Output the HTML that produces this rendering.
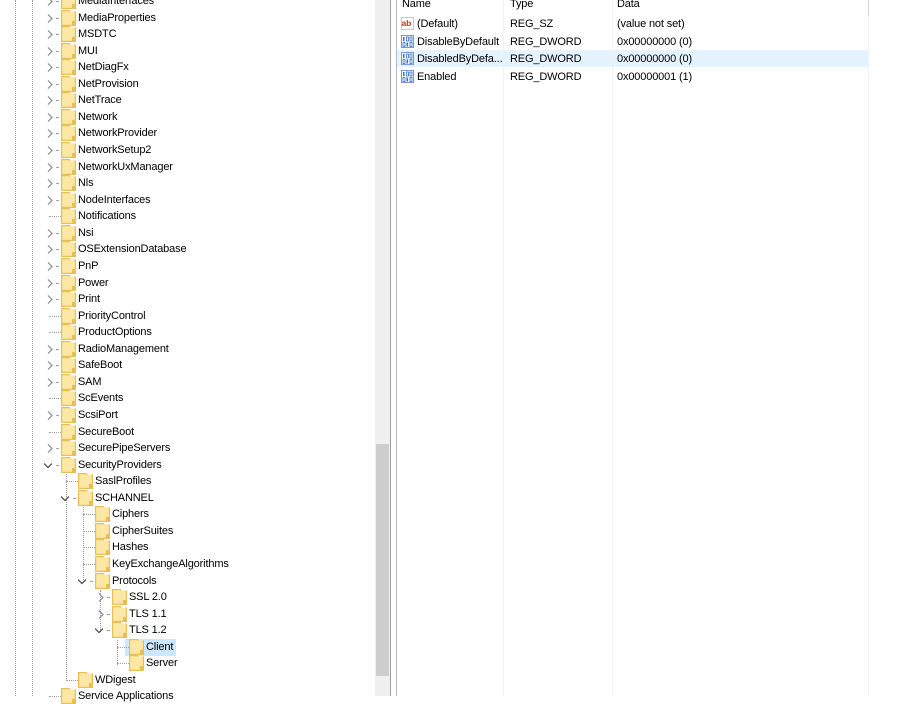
<!DOCTYPE html>
<html><head><meta charset="utf-8"><style>
*{margin:0;padding:0;box-sizing:border-box}
body{width:899px;height:696px;overflow:hidden;background:#fff;font-family:"Liberation Sans",sans-serif;font-size:11px;letter-spacing:-0.15px;color:#000;position:relative}
.r{position:absolute;left:0;width:374px;height:17px}
.t{position:absolute;top:2px;line-height:15px;white-space:nowrap;padding:0 2px;margin-left:-2px}
.f{position:absolute;top:1px;width:15px;height:16px}
.e{position:absolute;top:5px;width:8px;height:9px}
.dh{position:absolute;top:9px;height:0;border-top:1px dotted #a0a0a0}
.dash{position:absolute;top:9px;width:3px;height:1px;background:#a0a0a0}
.dv{position:absolute;width:0;border-left:1px dotted #a0a0a0}
.h{position:absolute;top:-2px;color:#000}
.rr{position:absolute;left:397px;width:471px;height:17px}
.rr span{position:absolute;top:3px;white-space:nowrap}
.ic{position:absolute;left:4px;top:2px;width:13px;height:13px}
</style></head><body>
<svg width="0" height="0" style="position:absolute"><defs>
<symbol id="fd" viewBox="0 0 15 16"><path d="M0.5 0.5h8l1 1.5h5v13.5h-14z" fill="#f8d775" stroke="#e6be5a"/><rect x="1.5" y="1.5" width="12" height="13" fill="#fde7a4"/><rect x="11" y="11" width="3" height="4" fill="#e8bd55"/></symbol>
<symbol id="cr" viewBox="0 0 8 9"><path d="M2 0.5l4 4-4 4" fill="none" stroke="#8a8a8a" stroke-width="1.2"/></symbol>
<symbol id="cd" viewBox="0 0 8 9"><path d="M0 2.5l4 4 4-4" fill="none" stroke="#444" stroke-width="1.2"/></symbol>
<symbol id="bin" viewBox="0 0 13 13"><rect x="0.5" y="0.5" width="12" height="12" fill="#fff" stroke="#7f96d0"/><rect x="2" y="2" width="1.5" height="4" fill="#3a6cc8"/><rect x="5.5" y="2" width="2" height="4" fill="none" stroke="#3a6cc8" stroke-width="0.8"/><rect x="9" y="2" width="2" height="4" fill="none" stroke="#3a6cc8" stroke-width="0.8"/><rect x="2" y="7.5" width="2" height="4" fill="none" stroke="#3a6cc8" stroke-width="0.8"/><rect x="5.5" y="7.5" width="1.5" height="4" fill="#3a6cc8"/><rect x="9" y="7.5" width="2" height="4" fill="none" stroke="#3a6cc8" stroke-width="0.8"/></symbol>
</defs></svg>

<div class="dv" style="left:15px;top:0;height:696px"></div>
<div class="dv" style="left:32px;top:0;height:696px"></div>
<div class="dv" style="left:66px;top:474px;height:207px"></div>
<div class="dv" style="left:83px;top:507px;height:75px"></div>
<div class="dv" style="left:100px;top:590px;height:42px"></div>
<div class="dv" style="left:117px;top:640px;height:25px"></div>

<div class="r" style="top:-8px"><svg class="e" style="left:46px"><use href="#cr"/></svg><div class="dash" style="left:56px"></div><svg class="f" style="left:61px"><use href="#fd"/></svg><span class="t" style="left:78px">MediaInterfaces</span></div>
<div class="r" style="top:9px"><svg class="e" style="left:46px"><use href="#cr"/></svg><div class="dash" style="left:56px"></div><svg class="f" style="left:61px"><use href="#fd"/></svg><span class="t" style="left:78px">MediaProperties</span></div>
<div class="r" style="top:25px"><svg class="e" style="left:46px"><use href="#cr"/></svg><div class="dash" style="left:56px"></div><svg class="f" style="left:61px"><use href="#fd"/></svg><span class="t" style="left:78px">MSDTC</span></div>
<div class="r" style="top:42px"><svg class="e" style="left:46px"><use href="#cr"/></svg><div class="dash" style="left:56px"></div><svg class="f" style="left:61px"><use href="#fd"/></svg><span class="t" style="left:78px">MUI</span></div>
<div class="r" style="top:58px"><svg class="e" style="left:46px"><use href="#cr"/></svg><div class="dash" style="left:56px"></div><svg class="f" style="left:61px"><use href="#fd"/></svg><span class="t" style="left:78px">NetDiagFx</span></div>
<div class="r" style="top:75px"><svg class="e" style="left:46px"><use href="#cr"/></svg><div class="dash" style="left:56px"></div><svg class="f" style="left:61px"><use href="#fd"/></svg><span class="t" style="left:78px">NetProvision</span></div>
<div class="r" style="top:91px"><svg class="e" style="left:46px"><use href="#cr"/></svg><div class="dash" style="left:56px"></div><svg class="f" style="left:61px"><use href="#fd"/></svg><span class="t" style="left:78px">NetTrace</span></div>
<div class="r" style="top:108px"><svg class="e" style="left:46px"><use href="#cr"/></svg><div class="dash" style="left:56px"></div><svg class="f" style="left:61px"><use href="#fd"/></svg><span class="t" style="left:78px">Network</span></div>
<div class="r" style="top:124px"><svg class="e" style="left:46px"><use href="#cr"/></svg><div class="dash" style="left:56px"></div><svg class="f" style="left:61px"><use href="#fd"/></svg><span class="t" style="left:78px">NetworkProvider</span></div>
<div class="r" style="top:141px"><svg class="e" style="left:46px"><use href="#cr"/></svg><div class="dash" style="left:56px"></div><svg class="f" style="left:61px"><use href="#fd"/></svg><span class="t" style="left:78px">NetworkSetup2</span></div>
<div class="r" style="top:158px"><svg class="e" style="left:46px"><use href="#cr"/></svg><div class="dash" style="left:56px"></div><svg class="f" style="left:61px"><use href="#fd"/></svg><span class="t" style="left:78px">NetworkUxManager</span></div>
<div class="r" style="top:174px"><svg class="e" style="left:46px"><use href="#cr"/></svg><div class="dash" style="left:56px"></div><svg class="f" style="left:61px"><use href="#fd"/></svg><span class="t" style="left:78px">Nls</span></div>
<div class="r" style="top:191px"><svg class="e" style="left:46px"><use href="#cr"/></svg><div class="dash" style="left:56px"></div><svg class="f" style="left:61px"><use href="#fd"/></svg><span class="t" style="left:78px">NodeInterfaces</span></div>
<div class="r" style="top:207px"><div class="dh" style="left:49px;width:12px"></div><svg class="f" style="left:61px"><use href="#fd"/></svg><span class="t" style="left:78px">Notifications</span></div>
<div class="r" style="top:224px"><svg class="e" style="left:46px"><use href="#cr"/></svg><div class="dash" style="left:56px"></div><svg class="f" style="left:61px"><use href="#fd"/></svg><span class="t" style="left:78px">Nsi</span></div>
<div class="r" style="top:240px"><svg class="e" style="left:46px"><use href="#cr"/></svg><div class="dash" style="left:56px"></div><svg class="f" style="left:61px"><use href="#fd"/></svg><span class="t" style="left:78px">OSExtensionDatabase</span></div>
<div class="r" style="top:257px"><svg class="e" style="left:46px"><use href="#cr"/></svg><div class="dash" style="left:56px"></div><svg class="f" style="left:61px"><use href="#fd"/></svg><span class="t" style="left:78px">PnP</span></div>
<div class="r" style="top:274px"><svg class="e" style="left:46px"><use href="#cr"/></svg><div class="dash" style="left:56px"></div><svg class="f" style="left:61px"><use href="#fd"/></svg><span class="t" style="left:78px">Power</span></div>
<div class="r" style="top:290px"><svg class="e" style="left:46px"><use href="#cr"/></svg><div class="dash" style="left:56px"></div><svg class="f" style="left:61px"><use href="#fd"/></svg><span class="t" style="left:78px">Print</span></div>
<div class="r" style="top:307px"><div class="dh" style="left:49px;width:12px"></div><svg class="f" style="left:61px"><use href="#fd"/></svg><span class="t" style="left:78px">PriorityControl</span></div>
<div class="r" style="top:323px"><div class="dh" style="left:49px;width:12px"></div><svg class="f" style="left:61px"><use href="#fd"/></svg><span class="t" style="left:78px">ProductOptions</span></div>
<div class="r" style="top:340px"><svg class="e" style="left:46px"><use href="#cr"/></svg><div class="dash" style="left:56px"></div><svg class="f" style="left:61px"><use href="#fd"/></svg><span class="t" style="left:78px">RadioManagement</span></div>
<div class="r" style="top:356px"><svg class="e" style="left:46px"><use href="#cr"/></svg><div class="dash" style="left:56px"></div><svg class="f" style="left:61px"><use href="#fd"/></svg><span class="t" style="left:78px">SafeBoot</span></div>
<div class="r" style="top:373px"><svg class="e" style="left:46px"><use href="#cr"/></svg><div class="dash" style="left:56px"></div><svg class="f" style="left:61px"><use href="#fd"/></svg><span class="t" style="left:78px">SAM</span></div>
<div class="r" style="top:389px"><div class="dh" style="left:49px;width:12px"></div><svg class="f" style="left:61px"><use href="#fd"/></svg><span class="t" style="left:78px">ScEvents</span></div>
<div class="r" style="top:406px"><svg class="e" style="left:46px"><use href="#cr"/></svg><div class="dash" style="left:56px"></div><svg class="f" style="left:61px"><use href="#fd"/></svg><span class="t" style="left:78px">ScsiPort</span></div>
<div class="r" style="top:423px"><div class="dh" style="left:49px;width:12px"></div><svg class="f" style="left:61px"><use href="#fd"/></svg><span class="t" style="left:78px">SecureBoot</span></div>
<div class="r" style="top:439px"><svg class="e" style="left:46px"><use href="#cr"/></svg><div class="dash" style="left:56px"></div><svg class="f" style="left:61px"><use href="#fd"/></svg><span class="t" style="left:78px">SecurePipeServers</span></div>
<div class="r" style="top:456px"><svg class="e" style="left:44px"><use href="#cd"/></svg><div class="dash" style="left:56px"></div><svg class="f" style="left:61px"><use href="#fd"/></svg><span class="t" style="left:78px">SecurityProviders</span></div>
<div class="r" style="top:472px"><div class="dh" style="left:66px;width:12px"></div><svg class="f" style="left:78px"><use href="#fd"/></svg><span class="t" style="left:95px">SaslProfiles</span></div>
<div class="r" style="top:489px"><svg class="e" style="left:61px"><use href="#cd"/></svg><div class="dash" style="left:73px"></div><svg class="f" style="left:78px"><use href="#fd"/></svg><span class="t" style="left:95px">SCHANNEL</span></div>
<div class="r" style="top:505px"><div class="dh" style="left:83px;width:12px"></div><svg class="f" style="left:95px"><use href="#fd"/></svg><span class="t" style="left:112px">Ciphers</span></div>
<div class="r" style="top:522px"><div class="dh" style="left:83px;width:12px"></div><svg class="f" style="left:95px"><use href="#fd"/></svg><span class="t" style="left:112px">CipherSuites</span></div>
<div class="r" style="top:538px"><div class="dh" style="left:83px;width:12px"></div><svg class="f" style="left:95px"><use href="#fd"/></svg><span class="t" style="left:112px">Hashes</span></div>
<div class="r" style="top:555px"><div class="dh" style="left:83px;width:12px"></div><svg class="f" style="left:95px"><use href="#fd"/></svg><span class="t" style="left:112px">KeyExchangeAlgorithms</span></div>
<div class="r" style="top:572px"><svg class="e" style="left:78px"><use href="#cd"/></svg><div class="dash" style="left:90px"></div><svg class="f" style="left:95px"><use href="#fd"/></svg><span class="t" style="left:112px">Protocols</span></div>
<div class="r" style="top:588px"><svg class="e" style="left:97px"><use href="#cr"/></svg><div class="dash" style="left:107px"></div><svg class="f" style="left:112px"><use href="#fd"/></svg><span class="t" style="left:129px">SSL 2.0</span></div>
<div class="r" style="top:605px"><svg class="e" style="left:97px"><use href="#cr"/></svg><div class="dash" style="left:107px"></div><svg class="f" style="left:112px"><use href="#fd"/></svg><span class="t" style="left:129px">TLS 1.1</span></div>
<div class="r" style="top:621px"><svg class="e" style="left:95px"><use href="#cd"/></svg><div class="dash" style="left:107px"></div><svg class="f" style="left:112px"><use href="#fd"/></svg><span class="t" style="left:129px">TLS 1.2</span></div>
<div class="r" style="top:638px"><div style="position:absolute;left:125px;top:1px;width:51px;height:17px;background:#cce8ff"></div><div class="dh" style="left:117px;width:12px"></div><svg class="f" style="left:129px"><use href="#fd"/></svg><span class="t" style="left:146px">Client</span></div>
<div class="r" style="top:654px"><div class="dh" style="left:117px;width:12px"></div><svg class="f" style="left:129px"><use href="#fd"/></svg><span class="t" style="left:146px">Server</span></div>
<div class="r" style="top:671px"><div class="dh" style="left:66px;width:12px"></div><svg class="f" style="left:78px"><use href="#fd"/></svg><span class="t" style="left:95px">WDigest</span></div>
<div class="r" style="top:687px"><div class="dh" style="left:49px;width:12px"></div><svg class="f" style="left:61px"><use href="#fd"/></svg><span class="t" style="left:78px">Service Applications</span></div>

<div style="position:absolute;left:375px;top:0;width:15px;height:696px;background:#f0f0f0"></div>
<div style="position:absolute;left:376px;top:444px;width:13px;height:232px;background:#cdcdcd"></div>
<div style="position:absolute;left:390px;top:0;width:7px;height:696px;background:#fff;border-left:1px solid #a0a0a0;border-right:1px solid #b8b8c0"></div>

<span class="h" style="left:402px">Name</span>
<span class="h" style="left:510px">Type</span>
<span class="h" style="left:617px">Data</span>
<div style="position:absolute;left:503px;top:0;width:1px;height:696px;background:#f2f2f2"></div>
<div style="position:absolute;left:612px;top:0;width:1px;height:696px;background:#f2f2f2"></div>
<div style="position:absolute;left:868px;top:0;width:1px;height:16px;background:#d8d8d8"></div>
<div style="position:absolute;left:868px;top:16px;width:1px;height:680px;background:#eaf4fe"></div>

<div class="rr" style="top:15px"><svg class="ic" viewBox="0 0 13 13"><rect x="0.5" y="0.5" width="12" height="12" fill="#fff" stroke="#c9c9c9"/><text x="0.5" y="9" font-size="8.5" font-weight="bold" font-family="Liberation Sans" fill="#d03020">ab</text></svg><span style="left:20px">(Default)</span><span style="left:113px">REG_SZ</span><span style="left:220px">(value not set)</span></div>
<div class="rr" style="top:33px"><svg class="ic" viewBox="0 0 13 13"><use href="#bin"/></svg><span style="left:20px">DisableByDefault</span><span style="left:113px">REG_DWORD</span><span style="left:220px">0x00000000 (0)</span></div>
<div class="rr" style="top:50px;background:#e5f3ff"><svg class="ic" viewBox="0 0 13 13"><use href="#bin"/></svg><span style="left:20px">DisabledByDefa...</span><span style="left:113px">REG_DWORD</span><span style="left:220px">0x00000000 (0)</span></div>
<div class="rr" style="top:68px"><svg class="ic" viewBox="0 0 13 13"><use href="#bin"/></svg><span style="left:20px">Enabled</span><span style="left:113px">REG_DWORD</span><span style="left:220px">0x00000001 (1)</span></div>
</body></html>
